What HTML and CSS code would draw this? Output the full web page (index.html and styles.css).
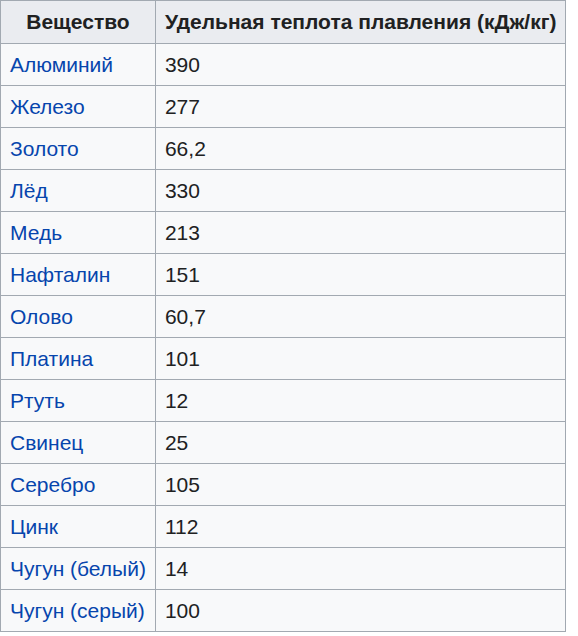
FILE: index.html
```html
<!DOCTYPE html>
<html lang="ru">
<head>
<meta charset="utf-8">
<link rel="stylesheet" href="styles.css">
</head>
<body>
<table class="wikitable">
<thead>
<tr><th class="c1">Вещество</th><th class="c2">Удельная теплота плавления (кДж/кг)</th></tr>
</thead>
<tbody>
<tr><td><a href="#">Алюминий</a></td><td>390</td></tr>
<tr><td><a href="#">Железо</a></td><td>277</td></tr>
<tr><td><a href="#">Золото</a></td><td>66,2</td></tr>
<tr><td><a href="#">Лёд</a></td><td>330</td></tr>
<tr><td><a href="#">Медь</a></td><td>213</td></tr>
<tr><td><a href="#">Нафталин</a></td><td>151</td></tr>
<tr><td><a href="#">Олово</a></td><td>60,7</td></tr>
<tr><td><a href="#">Платина</a></td><td>101</td></tr>
<tr><td><a href="#">Ртуть</a></td><td>12</td></tr>
<tr><td><a href="#">Свинец</a></td><td>25</td></tr>
<tr><td><a href="#">Серебро</a></td><td>105</td></tr>
<tr><td><a href="#">Цинк</a></td><td>112</td></tr>
<tr><td><a href="#">Чугун (белый)</a></td><td>14</td></tr>
<tr><td><a href="#">Чугун (серый)</a></td><td>100</td></tr>
</tbody>
</table>
</body>
</html>
```
FILE: styles.css
```css
html, body {
  margin: 0;
  padding: 0;
  background: #ffffff;
}
body {
  font-family: "Liberation Sans", Arial, sans-serif;
  font-size: 21px;
  color: #202122;
}
.wikitable {
  border-collapse: collapse;
  background: #f8f9fa;
  color: #202122;
  border: 1px solid #a2a9b1;
  width: 566px;
}
.wikitable th,
.wikitable td {
  border: 1px solid #a2a9b1;
  padding: 0 9px;
  height: 41px;
  line-height: 24px;
  text-align: left;
  white-space: nowrap;
}
.wikitable th {
  background: #eaecf0;
  text-align: center;
  font-weight: bold;
  height: 42px;
}
.wikitable .c1 {
  width: 136px;
}
.wikitable a {
  color: #0645ad;
  text-decoration: none;
}
```
